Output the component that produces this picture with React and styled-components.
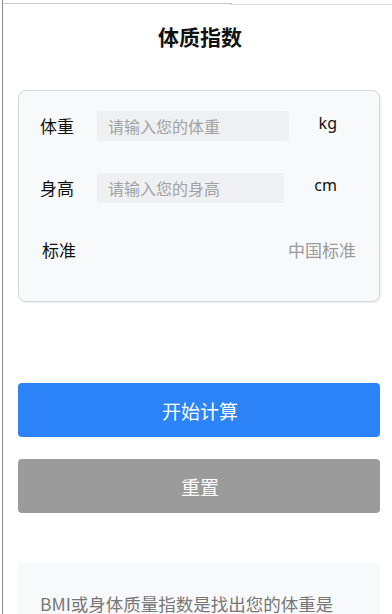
import React from "react";
import styled, { createGlobalStyle } from "styled-components";

const Global = createGlobalStyle`
  html, body { margin: 0; padding: 0; background: #fff; }
  body { font-family: "Noto Sans", "Noto Sans CJK SC", sans-serif; }
  * { box-sizing: border-box; }
`;

const Frame = styled.div`
  position: relative;
  height: 614px;
  overflow: hidden;
  border-left: 1px solid #8a8a8a;
  margin-left: 2px;
  width: 390px;
`;

const TopLine = styled.div`
  position: absolute;
  top: 3px;
  left: -3px;
  width: 232px;
  height: 1px;
  background: #c8c8c8;
`;

const TopLineRight = styled.div`
  position: absolute;
  top: 4px;
  left: 226px;
  right: 0;
  height: 1px;
  background: #e2e2e2;
`;

const Page = styled.div`
  display: flex;
  flex-direction: column;
  padding: 0 12px 0 15px;
`;

const Title = styled.h1`
  margin: 0;
  padding-top: 21px;
  height: 90px;
  text-align: center;
  font-family: "Noto Sans CJK SC", sans-serif;
  font-size: 21px;
  font-weight: 700;
  color: #111;
  line-height: 31px;
  padding-left: 2px;
`;

const Card = styled.div`
  height: 212px;
  border: 1px solid #d6d6d6;
  border-radius: 8px;
  background: #f8f9fb;
  box-shadow: 1px 1px 2px rgba(0,0,0,0.08);
  padding: 19px 22px 0 21px;
  display: flex;
  flex-direction: column;
`;

const Row = styled.div`
  display: flex;
  align-items: center;
  height: 31px;
  margin-top: ${p => p.$mt || 0}px;
`;

const Label = styled.span`
  width: 57px;
  flex: none;
  font-family: "Noto Sans CJK SC", sans-serif;
  font-size: 17px;
  color: #111;
  padding-left: ${p => p.$pl || 0}px;
`;

const Input = styled.input`
  flex: 1;
  min-width: 0;
  height: 30px;
  border: none;
  outline: none;
  background: #eff0f2;
  border-radius: 2px;
  padding: 0 11px;
  font-family: "Noto Sans CJK SC", sans-serif;
  font-size: 16px;
  color: #333;
  &::placeholder { color: #a2a2a2; }
`;

const Unit = styled.span`
  flex: none;
  margin-left: 30px;
  margin-right: 20px;
  margin-top: -6px;
  font-family: "Noto Sans", sans-serif;
  font-size: 16px;
  color: #111;
`;

const Value = styled.span`
  margin-left: auto;
  font-family: "Noto Sans CJK SC", sans-serif;
  font-size: 17px;
  color: #9a9a9a;
  margin-right: 1px;
`;

const Button = styled.button`
  height: 54px;
  border: none;
  border-radius: 4px;
  background: ${p => p.$bg};
  color: #fff;
  font-family: "Noto Sans CJK SC", sans-serif;
  font-size: 19px;
  margin-top: ${p => p.$mt}px;
  padding: 0;
  padding-left: 2px;
`;

const Info = styled.div`
  margin-top: 50px;
  background: #f8f9fa;
  border-radius: 4px;
  padding: 27px 36px 20px 22px;
  font-family: "Noto Sans CJK SC", sans-serif;
  font-size: 17.5px;
  line-height: 28px;
  color: #777;
`;

export default function App() {
  return (
    <>
      <Global />
      <Frame>
        <TopLine />
        <TopLineRight />
        <Page>
          <Title>体质指数</Title>
          <Card>
            <Row>
              <Label>体重</Label>
              <Input placeholder="请输入您的体重" />
              <Unit>kg</Unit>
            </Row>
            <Row $mt={31}>
              <Label>身高</Label>
              <Input placeholder="请输入您的身高" />
              <Unit>cm</Unit>
            </Row>
            <Row $mt={31}>
              <Label $pl={2}>标准</Label>
              <Value>中国标准</Value>
            </Row>
          </Card>
          <Button $bg="#2b83f7" $mt={81}>开始计算</Button>
          <Button $bg="#9b9b9b" $mt={22}>重置</Button>
          <Info>BMI或身体质量指数是找出您的体重是否在您的身高的健康范围内的一种方法。</Info>
        </Page>
      </Frame>
    </>
  );
}
